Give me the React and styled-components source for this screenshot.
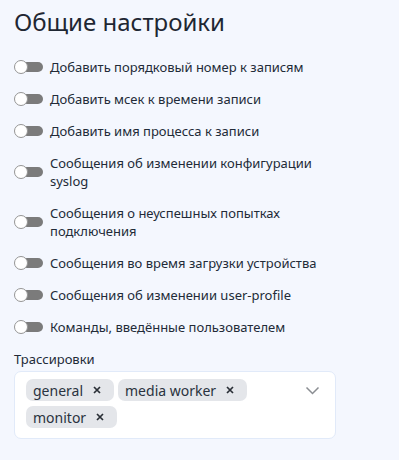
import React, { useState } from "react";
import styled, { createGlobalStyle } from "styled-components";

const GlobalStyle = createGlobalStyle`
  html, body {
    margin: 0;
    padding: 0;
    background: #f4f7fe;
  }
  body {
    font-family: "Noto Sans", "Open Sans", sans-serif;
    color: #222b38;
  }
`;

const Page = styled.div`
  width: 399px;
  height: 460px;
  box-sizing: border-box;
  padding: 6px 14px 0 14px;
  background: #f4f7fe;
`;

const Title = styled.h2`
  margin: 0 0 20px 0;
  font-size: 24px;
  font-weight: 400;
  line-height: 32px;
  color: #1f2733;
`;

const List = styled.div`
  width: 322px;
  display: flex;
  flex-direction: column;
  gap: 14px;
`;

const Row = styled.label`
  display: flex;
  align-items: center;
  gap: 7px;
  cursor: pointer;
`;

const Track = styled.span`
  position: relative;
  flex: 0 0 29px;
  width: 29px;
  height: 15px;
  display: flex;
  align-items: center;
  &::before {
    content: "";
    position: absolute;
    left: 8px;
    right: 0;
    height: 10px;
    border-radius: 5px;
    background: ${({ on }) => (on ? "#3a7bd5" : "#7b7b7b")};
  }
`;

const Knob = styled.span`
  position: absolute;
  left: ${({ on }) => (on ? "14px" : "0")};
  top: 0;
  width: 12px;
  height: 12px;
  border-radius: 50%;
  background: #fff;
  border: 1.5px solid #959595;
  z-index: 1;
`;

const Text = styled.span`
  font-size: 13px;
  line-height: 18px;
  color: #222b38;
`;

const FieldLabel = styled.div`
  margin-top: 14px;
  font-size: 13px;
  line-height: 18px;
  color: #222b38;
`;

const Select = styled.div`
  margin-top: 3px;
  width: 322px;
  box-sizing: border-box;
  background: #fff;
  border: 1px solid #e1eaf9;
  border-radius: 7px;
  padding: 7px 15px 10px 11px;
  display: flex;
  align-items: flex-start;
`;

const Chips = styled.div`
  flex: 1;
  display: flex;
  flex-wrap: wrap;
  gap: 5px 4px;
`;

const Chip = styled.span`
  display: inline-flex;
  align-items: center;
  height: 22px;
  padding: 0 13px 0 7px;
  gap: 10px;
  background: #e4e6ea;
  border-radius: 7px;
  font-size: 14px;
  color: #2a3340;
`;

const Remove = styled.span`
  display: flex;
  align-items: center;
  color: #2a2f36;
  cursor: pointer;
`;

const Chevron = styled.span`
  display: flex;
  align-items: center;
  height: 22px;
  color: #8a8d92;
`;

const settings = [
  "Добавить порядковый номер к записям",
  "Добавить мсек к времени записи",
  "Добавить имя процесса к записи",
  "Сообщения об изменении конфигурации syslog",
  "Сообщения о неуспешных попытках подключения",
  "Сообщения во время загрузки устройства",
  "Сообщения об изменении user-profile",
  "Команды, введённые пользователем",
];

const Toggle = ({ on, onClick }) => (
  <Track on={on ? 1 : 0} onClick={onClick}>
    <Knob on={on ? 1 : 0} />
  </Track>
);

export default function App() {
  const [state, setState] = useState(settings.map(() => false));
  const [traces, setTraces] = useState(["general", "media worker", "monitor"]);
  return (
    <Page>
      <GlobalStyle />
      <Title>Общие настройки</Title>
      <List>
        {settings.map((s, i) => (
          <Row key={s}>
            <Toggle
              on={state[i]}
              onClick={() => setState(state.map((v, j) => (j === i ? !v : v)))}
            />
            <Text>{s}</Text>
          </Row>
        ))}
      </List>
      <FieldLabel>Трассировки</FieldLabel>
      <Select>
        <Chips>
          {traces.map((t) => (
            <Chip key={t}>
              {t}
              <Remove onClick={() => setTraces(traces.filter((x) => x !== t))}>
                <svg width="8" height="8" viewBox="0 0 8 8">
                  <path d="M1 1l6 6M7 1L1 7" stroke="currentColor" strokeWidth="1.7" />
                </svg>
              </Remove>
            </Chip>
          ))}
        </Chips>
        <Chevron>
          <svg width="15" height="9" viewBox="0 0 15 9" fill="none">
            <path d="M1.5 1.5l6 6 6-6" stroke="currentColor" strokeWidth="1.5" />
          </svg>
        </Chevron>
      </Select>
    </Page>
  );
}
